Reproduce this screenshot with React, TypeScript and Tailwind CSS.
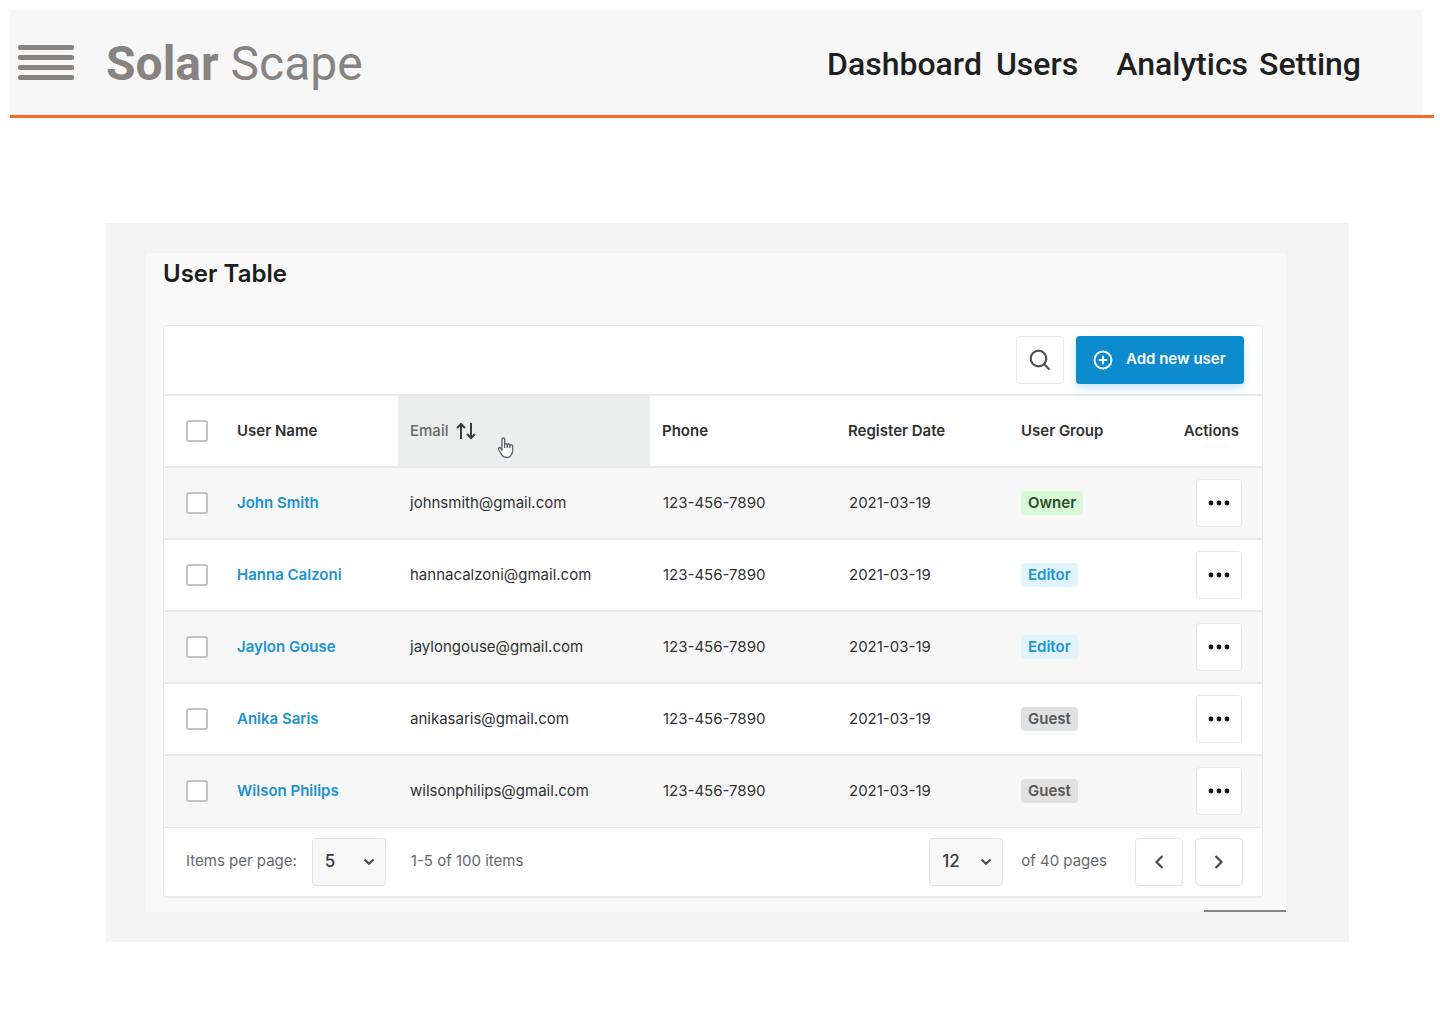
import { useState } from "react";

type Group = "Owner" | "Editor" | "Guest";

const users: { name: string; email: string; group: Group }[] = [
  { name: "John Smith", email: "johnsmith@gmail.com", group: "Owner" },
  { name: "Hanna Calzoni", email: "hannacalzoni@gmail.com", group: "Editor" },
  { name: "Jaylon Gouse", email: "jaylongouse@gmail.com", group: "Editor" },
  { name: "Anika Saris", email: "anikasaris@gmail.com", group: "Guest" },
  { name: "Wilson Philips", email: "wilsonphilips@gmail.com", group: "Guest" },
];

const groupStyle: Record<Group, string> = {
  Owner: "bg-[#d7f9d6] text-[#2c4a2c]",
  Editor: "bg-[#e1f3fd] text-[#1b93d2]",
  Guest: "bg-[#e0e1e2] text-[#55585a]",
};

function Checkbox({ label }: { label: string }) {
  return (
    <input
      type="checkbox"
      aria-label={label}
      className="block size-[22px] appearance-none rounded-[3px] border-2 border-[#c2c4c4] bg-white checked:bg-[#0c8ccf]"
    />
  );
}

function Header() {
  return (
    <header className="mr-1.5 ml-2.5 border-b-[3px] border-[#f96a20]">
      <div className="mr-3 flex h-[105px] items-center justify-between bg-[#f7f7f7] pr-[61px] pl-2">
        <div className="flex items-center gap-8">
          <button type="button" aria-label="Menu" className="flex w-14 flex-col gap-[5px]">
            <span className="h-[5px] w-full rounded-[2px] bg-[#878381]" />
            <span className="h-[5px] w-full rounded-[2px] bg-[#878381]" />
            <span className="h-[5px] w-full rounded-[2px] bg-[#878381]" />
            <span className="h-[5px] w-full rounded-[2px] bg-[#878381]" />
          </button>
          <a href="#" className="pt-0.5 text-5xl text-[#878381]">
            <span className="font-bold">Solar</span> Scape
          </a>
        </div>
        <nav className="flex items-center pt-0.5 text-[32px] font-medium text-[#1f1f1f]">
          <a href="#dashboard" className="mr-3.5">Dashboard</a>
          <a href="#users" className="mr-[38px]">Users</a>
          <a href="#analytics" className="mr-[11px]">Analytics</a>
          <a href="#setting">Setting</a>
        </nav>
      </div>
    </header>
  );
}

function PageSelect({ label, options }: { label: string; options: string[] }) {
  return (
    <span className="relative inline-flex">
      <select
        aria-label={label}
        className="h-12 w-[74px] appearance-none rounded border border-[#e2e3e3] bg-[#f8f8f8] pl-3 text-[17px] font-medium text-[#3a3c3d]"
      >
        {options.map((o) => (
          <option key={o}>{o}</option>
        ))}
      </select>
      <svg viewBox="0 0 12 8" className="pointer-events-none absolute top-5 right-[11px] h-2 w-3" fill="none" stroke="#4a4d4f" strokeWidth="2.200">
        <path d="M1.500 1.500 6 5.800l4.500-4.300" />
      </svg>
    </span>
  );
}

function HandCursor() {
  return (
    <svg viewBox="0 0 18 22" className="pointer-events-none absolute top-[41px] left-[99px] h-[22px] w-[18px]" fill="#fff" stroke="#62646e" strokeWidth="1.400" strokeLinejoin="round">
      <path d="M5 13.500V2.300c0-1.800 2.600-1.800 2.700 0V7.500c.3-1.300 2.400-1.200 2.600.2.500-1.100 2.400-.9 2.600.6.600-.9 2.600-.6 2.700.9v5c0 2-.8 3-1.600 4.100-.8 1.600-2 2.200-4 2.200-2.700 0-4-.6-5.200-2.700L2.200 13.500c-.8-1.400-.9-2.200-.2-2.700.8-.6 1.800 0 3 2.300Z" />
      <path d="M7.700 7.500v3.500M10.300 7.700V11M12.900 8.300V11" fill="none" />
    </svg>
  );
}

function UserTable() {
  const [descending, setDescending] = useState(false);
  return (
    <div className="overflow-hidden rounded border-x border-t border-b-2 border-[#e9eaea] bg-white text-[15px] text-[#2f3132]">
      <div className="flex h-[68px] items-center justify-end gap-3 pr-[18px] pb-px">
        <button type="button" aria-label="Search" className="flex h-12 w-12 items-center justify-center rounded border border-[#e6e7e7] bg-white">
          <svg viewBox="0 0 22 22" className="size-[22px]" fill="none" stroke="#505354" strokeWidth="2.200">
            <circle cx="9.500" cy="9.500" r="7.800" />
            <path d="m15 15 5.500 5.500" />
          </svg>
        </button>
        <button type="button" className="flex h-12 w-[168px] items-center rounded bg-[#0c8ccf] pl-[17px] font-semibold text-white shadow-[0_4px_10px_rgba(12,140,207,0.25)]">
          <svg viewBox="0 0 20 20" className="mr-[13px] size-5" fill="none" stroke="currentColor" strokeWidth="2">
            <circle cx="10" cy="10" r="8.500" />
            <path d="M10 5.800v8.400M5.800 10h8.400" />
          </svg>
          Add new user
        </button>
      </div>

      <table className="w-full table-fixed border-collapse text-left">
        <colgroup>
          <col className="w-[61px]" />
          <col className="w-[173px]" />
          <col className="w-[252px]" />
          <col className="w-[186px]" />
          <col className="w-[173px]" />
          <col className="w-[150px]" />
          <col className="w-[103px]" />
        </colgroup>
        <thead>
          <tr className="h-[72px] border-y-2 border-[#e9eaea]">
            <th className="pl-[22px]"><Checkbox label="Select all users" /></th>
            <th className="px-3 font-semibold">User Name</th>
            <th className="relative bg-[#eceeed] px-3 font-medium text-[#66696a]">
              <button type="button" onClick={() => setDescending(!descending)} className="flex items-center gap-2">
                Email
                <svg viewBox="0 0 20 18" className="h-[18px] w-5" fill="none" stroke="#3a3c3d" strokeWidth="2">
                  <path d="M5 17V2M1 6l4-4 4 4" />
                  <path d="M15 1v15M11 12l4 4 4-4" />
                </svg>
              </button>
              <HandCursor />
            </th>
            <th className="px-3 font-semibold">Phone</th>
            <th className="px-3 font-semibold">Register Date</th>
            <th className="px-3 font-semibold">User Group</th>
            <th className="pr-[23px] text-right font-semibold">Actions</th>
          </tr>
        </thead>
        <tbody>
          {users.map((u) => (
            <tr key={u.name} className="h-[72px] border-b-2 border-[#e9eaea] odd:bg-[#f7f7f7] last:border-b">
              <td className="pl-[22px]"><Checkbox label={`Select ${u.name}`} /></td>
              <td className="px-3 font-semibold text-[#1b93d2]"><a href="#user">{u.name}</a></td>
              <td className="px-3">{u.email}</td>
              <td className="px-[13px]">123-456-7890</td>
              <td className="px-[13px]">2021-03-19</td>
              <td className="px-3">
                <span className={`inline-block rounded px-[7px] leading-6 font-semibold ${groupStyle[u.group]}`}>{u.group}</span>
              </td>
              <td className="pr-5">
                <button type="button" aria-label={`Actions for ${u.name}`} className="ml-auto flex h-12 w-[46px] items-center justify-center rounded border border-[#e6e7e7] bg-white">
                  <svg viewBox="0 0 22 6" className="h-1.5 w-[22px]" fill="#111">
                    <circle cx="3" cy="3" r="2.400" />
                    <circle cx="11" cy="3" r="2.400" />
                    <circle cx="19" cy="3" r="2.400" />
                  </svg>
                </button>
              </td>
            </tr>
          ))}
        </tbody>
      </table>

      <div className="flex h-[68px] items-center pr-[19px] pl-[22px] text-[#66696a]">
        <span className="mr-[15px]">Items per page:</span>
        <PageSelect label="Items per page" options={["5", "10", "20"]} />
        <span className="ml-[25px]">1-5 of 100 items</span>
        <span className="ml-auto flex items-center">
          <PageSelect label="Page" options={["12", "13", "14"]} />
          <span className="mr-7 ml-[18px]">of 40 pages</span>
          <button type="button" aria-label="Previous page" className="mr-3 flex size-12 items-center justify-center rounded border border-[#e2e3e3]">
            <svg viewBox="0 0 10 16" className="h-4 w-2.5" fill="none" stroke="#4a4d4f" strokeWidth="2.200"><path d="M8.500 2 2.500 8l6 6" /></svg>
          </button>
          <button type="button" aria-label="Next page" className="flex size-12 items-center justify-center rounded border border-[#e2e3e3]">
            <svg viewBox="0 0 10 16" className="h-4 w-2.5" fill="none" stroke="#4a4d4f" strokeWidth="2.200"><path d="m1.500 2 6 6-6 6" /></svg>
          </button>
        </span>
      </div>
    </div>
  );
}

export default function App() {
  return (
    <div className="min-h-screen bg-white pt-2.5 font-['Roboto',sans-serif]">
      <Header />
      <main className="mt-[105px] mr-[91px] ml-[106px] bg-[#f4f4f4] pt-[30px] pr-[63px] pb-[30px] pl-10 font-['Inter',sans-serif]">
        <section className="bg-[#f9f9f9]">
          <div className="pr-[23px] pl-[17px]">
            <h1 className="h-[72px] pt-[5px] text-2xl font-semibold text-[#1c1d1e]">User Table</h1>
            <UserTable />
          </div>
          <div className="mt-3 ml-auto h-0.5 w-[82px] bg-[#858585]" />
        </section>
      </main>
    </div>
  );
}
